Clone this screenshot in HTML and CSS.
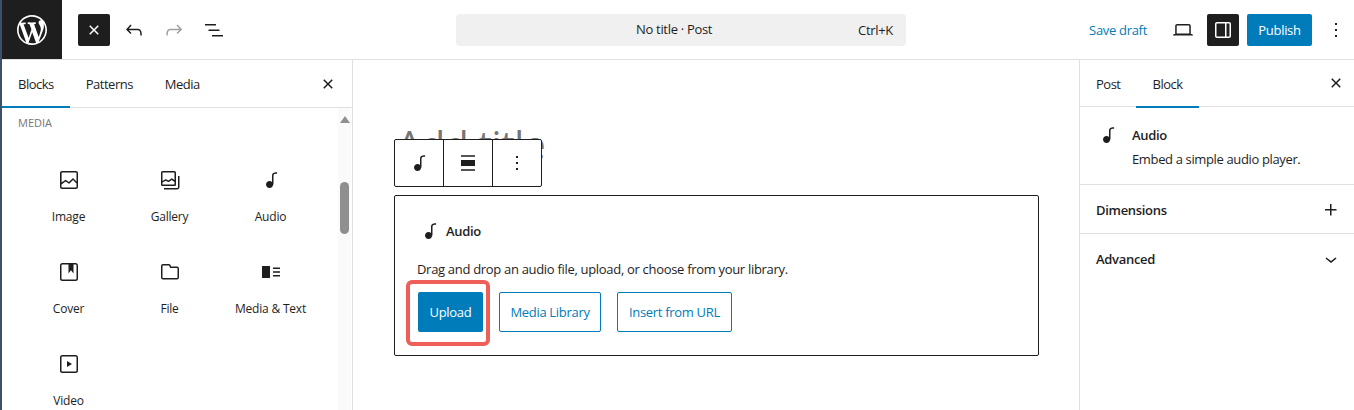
FILE: index.html
```html
<!DOCTYPE html>
<html lang="en">
<head>
    <meta charset="UTF-8">
    <meta name="viewport" content="width=device-width, initial-scale=1.0">
    <title>No title - Post</title>
    <link rel="stylesheet" href="styles.css">
</head>
<body>
    <header class="topbar">
        <div class="logo">
            <svg width="30" height="30" viewBox="0 0 20 20"><path d="M20 10c0-5.510-4.490-10-10-10C4.480 0 0 4.490 0 10c0 5.520 4.480 10 10 10 5.510 0 10-4.480 10-10zM7.780 15.370L4.370 6.220c.55-.02 1.170-.08 1.170-.08.5-.06.44-1.130-.06-1.110 0 0-1.450.11-2.370.11-.18 0-.37 0-.58-.01C4.120 2.690 6.870 1.110 10 1.110c2.330 0 4.450.87 6.050 2.340-.68-.11-1.650.39-1.650 1.580 0 .74.45 1.360.9 2.100.35.61.55 1.360.55 2.460 0 1.490-1.400 5-1.400 5l-3.030-8.370c.54-.02.82-.17.82-.17.5-.05.44-1.250-.06-1.220 0 0-1.440.12-2.380.12-.87 0-2.330-.12-2.330-.12-.5-.03-.56 1.200-.06 1.220l.92.08 1.260 3.410zM17.410 10c.24-.64.74-1.870.43-4.250.7 1.290 1.050 2.710 1.050 4.250 0 3.290-1.730 6.240-4.400 7.780.97-2.590 1.940-5.200 2.920-7.780zM6.100 18.090C3.120 16.650 1.110 13.530 1.110 10c0-1.300.23-2.480.72-3.590C3.250 10.300 4.670 14.200 6.100 18.090zm4.030-6.630l2.580 6.980c-.86.29-1.760.45-2.710.45-.79 0-1.570-.11-2.290-.33.81-2.380 1.620-4.740 2.420-7.100z"/></svg>
        </div>
        <div class="tools">
            <button class="icon-btn dark"><svg width="24" height="24" viewBox="0 0 24 24"><path d="M12 13.06l3.712 3.713 1.061-1.06L13.061 12l3.712-3.712-1.06-1.06L12 10.938 8.288 7.227l-1.061 1.06L10.939 12l-3.712 3.712 1.06 1.061L12 13.061z"/></svg></button>
            <button class="icon-btn plain"><svg width="24" height="24" viewBox="0 0 24 24"><path d="M18.3 11.7c-.6-.6-1.4-.9-2.3-.9H6.7l2.9-3.3-1.1-1-4.5 5L8.5 16l1-1-2.7-2.7H16c.5 0 .9.2 1.3.5 1 1 1 3.4 1 4.5v.3h1.500v-.2c0-1.500 0-4.300-1.500-5.700z"/></svg></button>
            <button class="icon-btn plain off"><svg width="24" height="24" viewBox="0 0 24 24"><path d="M15.6 6.5l-1.1 1 2.9 3.3H8c-.9 0-1.7.3-2.3.9-1.4 1.5-1.4 4.2-1.4 5.6v.2h1.5v-.3c0-1.1 0-3.5 1-4.5.3-.3.7-.5 1.3-.5h9.2L14.5 15l1.1 1.1 4.6-4.6-4.6-5z"/></svg></button>
            <button class="icon-btn plain"><svg width="24" height="24" viewBox="0 0 24 24"><path d="M3 6h11v1.5H3V6Zm3.5 5.5h11V13h-11v-1.5ZM21 17H10v1.5h11V17Z"/></svg></button>
        </div>
        <div class="command-bar">
            <span class="doc-title">No title · Post</span>
            <span class="shortcut">Ctrl+K</span>
        </div>
        <div class="actions">
            <a class="save-draft">Save draft</a>
            <button class="icon-btn plain preview"><svg width="24" height="24" viewBox="0 0 24 24"><path d="M20.5 16h-.7V8c0-1.1-.9-2-2-2H6.2c-1.1 0-2 .9-2 2v8h-.7c-.8 0-1.5.7-1.5 1.5h20c0-.8-.7-1.5-1.5-1.5zM5.7 8c0-.3.2-.5.5-.5h11.6c.3 0 .5.2.5.5v7.6H5.7V8z"/></svg></button>
            <button class="icon-btn dark"><svg width="24" height="24" viewBox="0 0 24 24"><path d="M18 4H6c-1.1 0-2 .9-2 2v12c0 1.1.9 2 2 2h12c1.1 0 2-.9 2-2V6c0-1.1-.9-2-2-2zm-4 14.5H6c-.3 0-.5-.2-.5-.5V6c0-.3.2-.5.5-.5h8v13zm4.5-.5c0 .3-.2.5-.5.5h-2.5v-13H18c.3 0 .5.2.5.5v12z"/></svg></button>
            <button class="publish">Publish</button>
            <button class="icon-btn plain kebab"><svg width="24" height="24" viewBox="0 0 24 24"><path d="M13 19h-2v-2h2v2zm0-6h-2v-2h2v2zm0-6h-2V5h2v2z"/></svg></button>
        </div>
    </header>

    <div class="workspace">
        <aside class="inserter">
            <div class="tabs">
                <span class="tab active">Blocks</span>
                <span class="tab">Patterns</span>
                <span class="tab">Media</span>
                <button class="close"><svg width="24" height="24" viewBox="0 0 24 24"><path d="M12 13.06l3.712 3.713 1.061-1.06L13.061 12l3.712-3.712-1.06-1.06L12 10.938 8.288 7.227l-1.061 1.06L10.939 12l-3.712 3.712 1.06 1.061L12 13.061z"/></svg></button>
            </div>
            <div class="inserter-body">
                <div class="block-list">
                    <h3 class="group-title">Media</h3>
                    <div class="block-grid">
                        <div class="block-item">
                            <svg width="24" height="24" viewBox="0 0 24 24"><path d="M19 3H5c-1.1 0-2 .9-2 2v14c0 1.1.9 2 2 2h14c1.1 0 2-.9 2-2V5c0-1.1-.9-2-2-2zM5 4.5h14c.3 0 .5.2.5.5v8.4l-3-2.9c-.3-.3-.8-.3-1 0L11.9 14 9 12c-.3-.2-.6-.2-.8 0l-3.6 2.600V5c-.1-.3.1-.5.4-.5zm14 15H5c-.3 0-.5-.2-.5-.5v-2.400l4.100-3 3 1.900c.3.2.7.2.9-.1L16 12l3.500 3.400V19c0 .3-.2.5-.5.5z"/></svg>
                            <span>Image</span>
                        </div>
                        <div class="block-item">
                            <svg width="24" height="24" viewBox="0 0 24 24"><path fill-rule="evenodd" d="M16.375 4.5H4.625a.125.125 0 0 0-.125.125v8.254l2.859-1.54a.75.75 0 0 1 .68-.016l2.384 1.142 2.89-2.074a.75.75 0 0 1 .874 0l2.313 1.66V4.625a.125.125 0 0 0-.125-.125Zm.125 9.398-2.75-1.975-2.813 2.02a.75.75 0 0 1-.76.067l-2.444-1.17L4.5 14.583v1.792c0 .069.056.125.125.125h11.75a.125.125 0 0 0 .125-.125v-2.477ZM4.625 3C3.728 3 3 3.728 3 4.625v11.75C3 17.273 3.728 18 4.625 18h11.75c.898 0 1.625-.727 1.625-1.625V4.625C18 3.728 17.273 3 16.375 3H4.625ZM20 8v11c0 .69-.31 1-.999 1H6v1.5h13.001c1.52 0 2.499-.982 2.499-2.5V8H20Z"/></svg>
                            <span>Gallery</span>
                        </div>
                        <div class="block-item">
                            <svg width="24" height="24" viewBox="0 0 24 24"><path d="M17.7 4.3c-1.2 0-2.8 0-3.8 1-.6.6-.9 1.5-.9 2.6V14c-.6-.6-1.5-1-2.5-1C8.6 13 7 14.6 7 16.5S8.6 20 10.5 20c1.5 0 2.8-1 3.3-2.3.5-.8.7-1.8.7-2.5V7.9c0-.7.2-1.2.5-1.6.6-.6 1.8-.6 2.8-.6h.3V4.3h-.4z"/></svg>
                            <span>Audio</span>
                        </div>
                        <div class="block-item">
                            <svg width="24" height="24" viewBox="0 0 24 24"><path d="M18.7 3H5.3C4 3 3 4 3 5.3v13.4C3 20 4 21 5.3 21h13.4c1.3 0 2.3-1 2.3-2.3V5.3C21 4 20 3 18.7 3zm.8 15.7c0 .4-.4.8-.8.8H5.3c-.4 0-.8-.4-.8-.8V5.3c0-.4.4-.8.8-.8h6.2v8.9l2.5-3.1 2.5 3.1V4.5h2.2c.4 0 .8.4.8.8v13.4z"/></svg>
                            <span>Cover</span>
                        </div>
                        <div class="block-item">
                            <svg width="24" height="24" viewBox="0 0 24 24"><path fill-rule="evenodd" d="M5 4h5.763a2 2 0 0 1 1.790 1.106l.445 1.084a.5.500 0 0 0 .462.31H19a2 2 0 0 1 2 2v9a2 2 0 0 1-2 2H5a2 2 0 0 1-2-2V6a2 2 0 0 1 2-2Zm0 1.500a.5.500 0 0 0-.5.5v11.500a.5.500 0 0 0 .5.5h14a.5.500 0 0 0 .5-.5v-9A.5.500 0 0 0 19 8h-6.152a1 1 0 0 1-.914-.594l-.723-1.630a.5.500 0 0 0-.447-.276H5Z"/></svg>
                            <span>File</span>
                        </div>
                        <div class="block-item">
                            <svg width="24" height="24" viewBox="0 0 24 24"><path d="M3 18h8V6H3v12zM14 7.5V9h7V7.5h-7zm0 5.25h7v-1.5h-7v1.5zm0 3.75h7V15h-7v1.5z"/></svg>
                            <span>Media &amp; Text</span>
                        </div>
                        <div class="block-item">
                            <svg width="24" height="24" viewBox="0 0 24 24"><path d="M18.7 3H5.3C4 3 3 4 3 5.3v13.4C3 20 4 21 5.3 21h13.4c1.3 0 2.3-1 2.3-2.3V5.3C21 4 20 3 18.7 3zm.8 15.7c0 .4-.4.8-.8.8H5.3c-.4 0-.8-.4-.8-.8V5.3c0-.4.4-.8.8-.8h13.4c.4 0 .8.4.8.8v13.4zM10 15l5-3-5-3v6z"/></svg>
                            <span>Video</span>
                        </div>
                    </div>
                </div>
                <div class="scrollbar">
                    <span class="scroll-up"></span>
                    <span class="scroll-thumb"></span>
                </div>
            </div>
        </aside>

        <main class="canvas">
            <div class="post">
                <h1 class="post-title">Add title</h1>
                <div class="block-toolbar">
                    <button class="tool-btn"><svg width="24" height="24" viewBox="0 0 24 24"><path d="M17.7 4.3c-1.2 0-2.8 0-3.8 1-.6.6-.9 1.5-.9 2.6V14c-.6-.6-1.5-1-2.5-1C8.6 13 7 14.6 7 16.5S8.6 20 10.5 20c1.5 0 2.8-1 3.3-2.3.5-.8.7-1.8.7-2.5V7.9c0-.7.2-1.2.5-1.6.6-.6 1.8-.6 2.8-.6h.3V4.3h-.4z"/></svg></button>
                    <button class="tool-btn"><svg width="24" height="24" viewBox="0 0 24 24"><path d="M5 15h14V9H5v6zm0 4.8h14v-1.5H5v1.5zM5 4.2v1.5h14V4.2H5z"/></svg></button>
                    <button class="tool-btn"><svg width="24" height="24" viewBox="0 0 24 24"><path d="M13 19h-2v-2h2v2zm0-6h-2v-2h2v2zm0-6h-2V5h2v2z"/></svg></button>
                </div>
                <section class="placeholder">
                    <div class="placeholder-label">
                        <svg width="24" height="24" viewBox="0 0 24 24"><path d="M17.7 4.3c-1.2 0-2.8 0-3.8 1-.6.6-.9 1.5-.9 2.6V14c-.6-.6-1.5-1-2.5-1C8.6 13 7 14.6 7 16.5S8.6 20 10.5 20c1.5 0 2.8-1 3.3-2.3.5-.8.7-1.8.7-2.5V7.9c0-.7.2-1.2.5-1.6.6-.6 1.8-.6 2.8-.6h.3V4.3h-.4z"/></svg>
                        <span>Audio</span>
                    </div>
                    <p class="placeholder-text">Drag and drop an audio file, upload, or choose from your library.</p>
                    <div class="placeholder-buttons">
                        <button class="btn primary">Upload<span class="highlight"></span></button>
                        <button class="btn outline">Media Library</button>
                        <button class="btn outline url">Insert from URL</button>
                    </div>
                </section>
            </div>
        </main>

        <aside class="settings">
            <div class="tabs settings-tabs">
                <span class="tab">Post</span>
                <span class="tab active">Block</span>
                <button class="close"><svg width="24" height="24" viewBox="0 0 24 24"><path d="M12 13.06l3.712 3.713 1.061-1.06L13.061 12l3.712-3.712-1.06-1.06L12 10.938 8.288 7.227l-1.061 1.06L10.939 12l-3.712 3.712 1.06 1.061L12 13.061z"/></svg></button>
            </div>
            <div class="block-card">
                <svg width="24" height="24" viewBox="0 0 24 24"><path d="M17.7 4.3c-1.2 0-2.8 0-3.8 1-.6.6-.9 1.5-.9 2.6V14c-.6-.6-1.5-1-2.5-1C8.6 13 7 14.6 7 16.5S8.6 20 10.5 20c1.5 0 2.8-1 3.3-2.3.5-.8.7-1.8.7-2.5V7.9c0-.7.2-1.2.5-1.6.6-.6 1.8-.6 2.8-.6h.3V4.3h-.4z"/></svg>
                <div>
                    <div class="card-title">Audio</div>
                    <div class="card-desc">Embed a simple audio player.</div>
                </div>
            </div>
            <div class="panel-row">
                <span>Dimensions</span>
                <svg width="24" height="24" viewBox="0 0 24 24"><path d="M11 12.5V17.5H12.5V12.5H17.5V11H12.5V6H11V11H6V12.5H11Z"/></svg>
            </div>
            <div class="panel-row last">
                <span>Advanced</span>
                <svg width="24" height="24" viewBox="0 0 24 24"><path d="M17.5 11.6L12 16l-5.5-4.4.9-1.2L12 14l4.5-3.6 1 1.2z"/></svg>
            </div>
        </aside>
    </div>
</body>
</html>
```

FILE: styles.css
```css
* {
    box-sizing: border-box;
}
html, body {
    height: 100%;
}
body {
    margin: 0;
    display: flex;
    flex-direction: column;
    overflow: hidden;
    background: white;
    border-left: 2px solid #3c5068;
    color: #1e1e1e;
    font-family: "Open Sans", "Noto Sans", Arial, sans-serif;
    font-size: 13px;
    letter-spacing: -0.31px;
}
button {
    padding: 0;
    border: none;
    background: none;
    color: inherit;
    font: inherit;
    letter-spacing: inherit;
    cursor: pointer;
}
svg {
    display: block;
    flex: none;
    fill: currentColor;
}

/* top bar */
.topbar {
    display: flex;
    align-items: center;
    height: 60px;
    flex: none;
    border-bottom: 1px solid #e0e0e0;
}
.logo {
    display: flex;
    align-items: center;
    justify-content: center;
    width: 60px;
    height: 59px;
    background: #1e1e1e;
    color: white;
}
.tools {
    display: flex;
    align-items: center;
    gap: 16px;
    margin-left: 16px;
}
.tools .dark {
    margin-right: -4px;
}
.icon-btn {
    display: flex;
    align-items: center;
    justify-content: center;
}
.icon-btn.dark {
    width: 32px;
    height: 32px;
    border-radius: 2px;
    background: #1e1e1e;
    color: white;
}
.icon-btn.plain {
    width: 24px;
    height: 32px;
}
.icon-btn.off {
    color: #a0a0a0;
}
.command-bar {
    display: flex;
    align-items: center;
    width: 450px;
    height: 32px;
    margin-left: 230px;
    padding: 0 13px 0 180px;
    border-radius: 4px;
    background: #f0f0f0;
}
.doc-title {
    flex: 1;
    margin-top: -2px;
}
.actions {
    display: flex;
    align-items: center;
    margin-left: auto;
    padding-right: 6px;
}
.save-draft {
    color: #007cba;
    margin-right: 24px;
}
.preview {
    margin-right: 12px;
}
.publish {
    width: 65px;
    height: 32px;
    margin: 0 12px 0 8px;
    border-radius: 2px;
    background: #007cba;
    color: white;
}

/* three columns */
.workspace {
    display: flex;
    flex: 1;
    min-height: 0;
}
.inserter {
    display: flex;
    flex-direction: column;
    width: 351px;
    flex: none;
    border-right: 1px solid #e0e0e0;
}
.tabs {
    display: flex;
    align-items: center;
    height: 48px;
    flex: none;
    border-bottom: 1px solid #e0e0e0;
    letter-spacing: -0.5px;
}
.tab {
    display: flex;
    align-items: center;
    height: 48px;
    padding: 0 16px;
    margin-top: 1px;
}
.tab.active {
    box-shadow: inset 0 -2px 0 #007cba;
}
.close {
    margin-left: auto;
    margin-right: 12px;
}
.inserter-body {
    display: flex;
    flex: 1;
    min-height: 0;
}
.block-list {
    flex: 1;
    padding: 0 16px;
    overflow: hidden;
}
.group-title {
    margin: 8px 0 0;
    font-size: 11px;
    font-weight: 500;
    line-height: 14px;
    letter-spacing: 0;
    text-transform: uppercase;
    color: #757575;
}
.block-grid {
    display: grid;
    grid-template-columns: repeat(3, 101px);
    grid-auto-rows: 92px;
    margin-top: 38px;
}
.block-item {
    display: flex;
    flex-direction: column;
    align-items: center;
    font-size: 12px;
    letter-spacing: -0.2px;
}
.block-item span {
    margin-top: 16px;
    line-height: 18px;
}
.scrollbar {
    width: 13px;
    flex: none;
    margin-right: 1px;
    background: #fafafa;
    display: flex;
    flex-direction: column;
    align-items: center;
}
.scroll-up {
    width: 0;
    height: 0;
    margin-top: 8px;
    border-left: 5px solid transparent;
    border-right: 5px solid transparent;
    border-bottom: 7px solid #8f8f8f;
}
.scroll-thumb {
    width: 9px;
    height: 52px;
    margin-top: 59px;
    border-radius: 5px;
    background: #8f8f8f;
}

/* editor canvas */
.canvas {
    flex: 1;
    min-width: 0;
    padding-left: 41px;
}
.post {
    position: relative;
    width: 645px;
    padding-top: 135px;
}
.post-title {
    position: absolute;
    top: 60px;
    left: 3px;
    margin: 0;
    font-size: 39px;
    font-weight: 400;
    line-height: 48px;
    letter-spacing: -0.4px;
    color: #757575;
    white-space: nowrap;
}
.block-toolbar {
    position: absolute;
    top: 79px;
    left: 0;
    display: flex;
    height: 48px;
    border: 1px solid #1e1e1e;
    border-radius: 2px;
    background: white;
}
.tool-btn {
    display: flex;
    align-items: center;
    justify-content: center;
    width: 49px;
    border-right: 1px solid #1e1e1e;
}
.tool-btn:last-child {
    width: 48px;
    border-right: none;
}
.placeholder {
    height: 161px;
    padding: 23px 23px 0;
    border: 1px solid #1e1e1e;
    border-radius: 2px;
}
.placeholder-label {
    display: flex;
    align-items: center;
    gap: 4px;
    height: 24px;
    font-weight: 600;
}
.placeholder-text {
    margin: 17px 0 0 -1px;
    line-height: 18px;
}
.placeholder-buttons {
    display: flex;
    gap: 16px;
    margin-top: 14px;
}
.btn {
    position: relative;
    width: 102px;
    height: 40px;
    border-radius: 2px;
}
.btn.primary {
    width: 65px;
    background: #007cba;
    color: white;
}
.btn.outline {
    border: 1px solid #007cba;
    color: #007cba;
}
.btn.url {
    width: 115px;
}
/* red annotation around the upload button */
.highlight {
    position: absolute;
    top: -12px;
    left: -12px;
    width: 84px;
    height: 66px;
    border: 4px solid #ef5f5a;
    border-radius: 6px;
}

/* right sidebar */
.settings {
    width: 275px;
    flex: none;
    border-left: 1px solid #e0e0e0;
}
.settings-tabs {
    height: 47px;
}
.settings-tabs .close {
    margin-right: 6px;
}
.block-card {
    display: flex;
    gap: 12px;
    height: 78px;
    padding: 16px 16px 0;
    border-bottom: 1px solid #e0e0e0;
}
.card-title {
    font-weight: 600;
    line-height: 24px;
}
.card-desc {
    margin-top: 2px;
    line-height: 20px;
    letter-spacing: -0.36px;
}
.panel-row {
    display: flex;
    align-items: center;
    justify-content: space-between;
    height: 49px;
    padding: 1px 11px 0 16px;
    border-bottom: 1px solid #e0e0e0;
    font-weight: 600;
}
.panel-row.last {
    padding-top: 0;
    border-bottom: none;
}
```
